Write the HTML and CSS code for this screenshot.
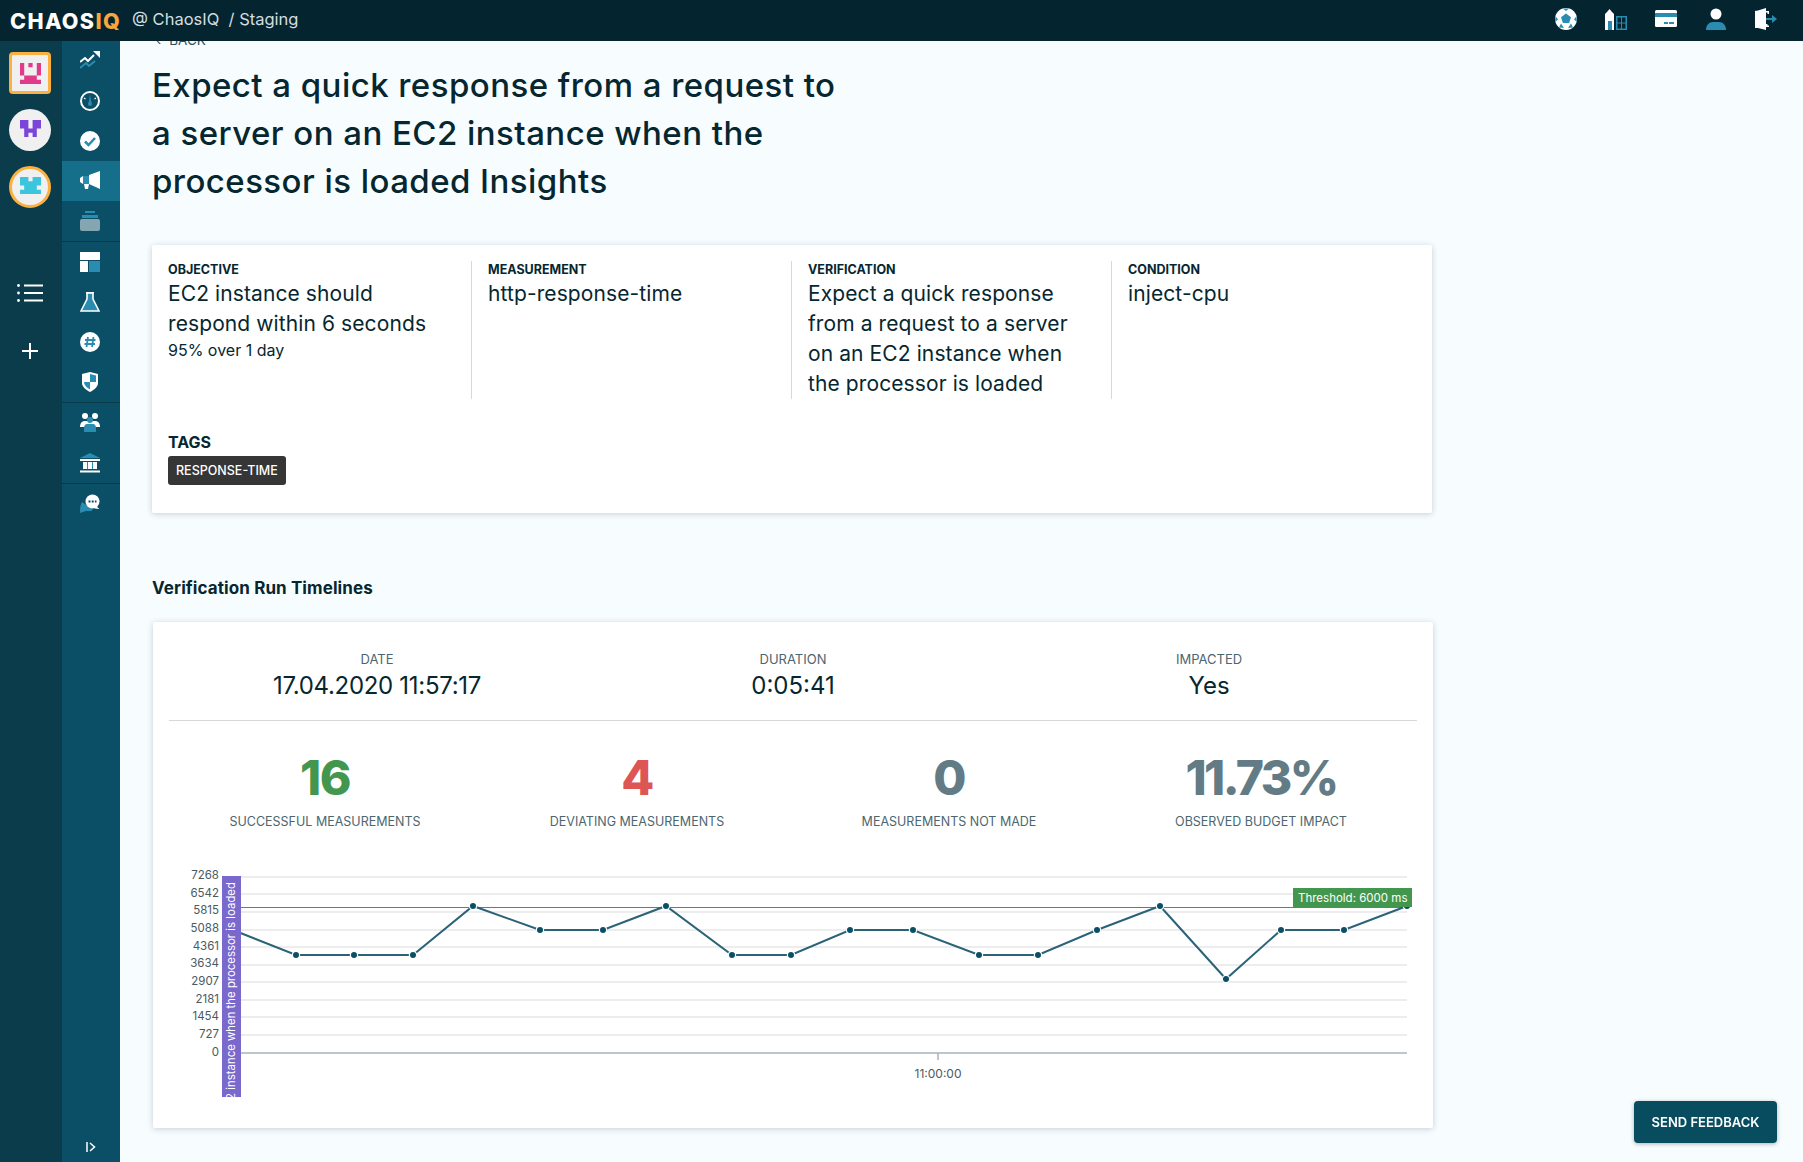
FILE: index.html
```html
<!DOCTYPE html>
<html lang="en">
<head>
  <meta charset="UTF-8">
  <title>Expect a quick response - Insights</title>
  <link rel="stylesheet" href="styles.css">
</head>
<body>
  <!-- Top bar -->
  <header class="topbar">
    <div class="logo">CHAOS<span class="logo-iq">IQ</span></div>
    <div class="crumbs">@ ChaosIQ &nbsp;/ Staging</div>
    <div class="top-icons">
      <svg viewBox="0 0 22 22" class="top-icon"><circle cx="11" cy="11" r="11" fill="#fff"/><path d="M11 5.500l5 3.700-1.900 5.800H7.900L6 9.200z" fill="#2a8cb0"/><path d="M8 .5h6L11 3zM21.500 8l.5 6-3-2.500zM.5 8L0 14l3-2.500zM4 19.500l2-4 3 4.500zM18 19.500l-2-4-3 4.500z" fill="#2a8cb0"/></svg>
      <svg viewBox="0 0 22 22" class="top-icon"><path d="M0 6l2-2 2.500-3L7 4l2 2v16H0z" fill="#fff"/><rect x="3" y="13" width="4" height="9" fill="#2a8cb0"/><path d="M11 8h11v14H11zM12.500 9.500v5h3.500v-5zM17 9.500v5h3.500v-5zM12.500 15.500v5h3.500v-5zM17 15.500v5h3.500v-5z" fill="#2a8cb0" fill-rule="evenodd"/></svg>
      <svg viewBox="0 0 22 18" class="top-icon"><rect width="22" height="17" rx="1.500" fill="#fff"/><rect y="3" width="22" height="4" fill="#2a8cb0"/><rect x="9" y="12" width="4" height="2" fill="#2a8cb0"/><rect x="14" y="12" width="5" height="2" fill="#2a8cb0"/></svg>
      <svg viewBox="0 0 22 22" class="top-icon"><circle cx="11" cy="6" r="5.500" fill="#fff"/><path d="M1 22c0-5 3-8 7-8h6c4 0 7 3 7 8z" fill="#2a8cb0"/></svg>
      <svg viewBox="0 0 22 22" class="top-icon"><path d="M0 3l3-.5L11 0v22l-8-2H0z" fill="#fff"/><path d="M11 3h3v3h-1.500V4.500H11zM11 16h1.500v1.500H14V19h-3z" fill="#fff"/><path d="M11 10h6V7l5 4-5 4v-3h-6z" fill="#2a8cb0"/></svg>
    </div>
  </header>

  <div class="layout">
    <!-- Workspace rail -->
    <aside class="rail">
      <div class="avatar avatar-square">
        <svg viewBox="0 0 5 5" class="pixel"><path d="M0 0h1v3H0zM2 0h1v1H2zM4 0h1v3H4zM1 3h3v1H1zM0 4h5v1H0z" fill="#e03a8b"/></svg>
      </div>
      <div class="avatar">
        <svg viewBox="0 0 5 4" class="pixel pixel-short"><path d="M0 0h2v2h1V0h2v2H4v2H3V3H2v1H1V2H0z" fill="#7a45d8"/></svg>
      </div>
      <div class="avatar avatar-ring">
        <svg viewBox="0 0 5 4" class="pixel pixel-short"><path d="M0 0h2v1h1V0h2v2H4v1h1v1H0V3h1V2H0z" fill="#3cc6de"/></svg>
      </div>
      <svg viewBox="0 0 26 18" class="rail-list"><circle cx="1.500" cy="1.500" r="1.400" fill="#fff"/><circle cx="1.500" cy="9" r="1.400" fill="#fff"/><circle cx="1.500" cy="16.500" r="1.400" fill="#fff"/><path d="M7 1.500h19M7 9h19M7 16.500h19" stroke="#fff" stroke-width="2"/></svg>
      <svg viewBox="0 0 16 16" class="rail-plus"><path d="M8 0v16M0 8h16" stroke="#fff" stroke-width="2"/></svg>
    </aside>

    <!-- Section nav -->
    <nav class="nav">
      <div class="nav-item"><svg viewBox="0 0 20 20"><path d="M0 11l5-4 3 3 6-6" fill="none" stroke="#fff" stroke-width="2"/><path d="M13 0h7v7z" fill="#fff"/><path d="M0 17l6-5 3 3 6-5" fill="none" stroke="#2a8cb0" stroke-width="2"/></svg></div>
      <div class="nav-item"><svg viewBox="0 0 20 20"><circle cx="10" cy="10" r="9" fill="none" stroke="#fff" stroke-width="2"/><path d="M10 3l1.500 10h-3z" fill="#2a8cb0"/><circle cx="10" cy="13" r="2" fill="#2a8cb0"/><path d="M4 7l1.500 1M16 7l-1.500 1" stroke="#fff" stroke-width="1.200"/></svg></div>
      <div class="nav-item"><svg viewBox="0 0 20 20"><circle cx="10" cy="10" r="10" fill="#fff"/><path d="M5 10.500l3.500 3.500L15 7" fill="none" stroke="#2a8cb0" stroke-width="2.500"/></svg></div>
      <div class="nav-item nav-active"><svg viewBox="0 0 20 20"><path d="M0 7l3-2v8l-3-2z" fill="#fff"/><path d="M3 5h6v8H3z" fill="#2a8cb0"/><path d="M9 4l11-4v18L9 13z" fill="#fff"/><path d="M4 13h5l-1 5H5z" fill="#fff"/></svg></div>
      <div class="nav-item nav-split"><svg viewBox="0 0 20 20"><rect x="5" y="0" width="10" height="2" fill="#2a8cb0"/><rect x="2" y="4" width="16" height="3" fill="#2a8cb0"/><rect y="8" width="20" height="12" rx="2" fill="#85a5b2"/></svg></div>
      <div class="nav-item"><svg viewBox="0 0 20 20"><rect width="20" height="8" fill="#fff"/><rect y="9" width="8" height="11" fill="#fff"/><rect x="9" y="9" width="11" height="11" fill="#2a8cb0"/></svg></div>
      <div class="nav-item"><svg viewBox="0 0 20 20"><path d="M7 1h6v6l6 12H1L7 7z" fill="#2a8cb0" stroke="#fff" stroke-width="1.600"/><path d="M6 .5h8" stroke="#fff" stroke-width="1.500"/></svg></div>
      <div class="nav-item"><svg viewBox="0 0 20 20"><circle cx="10" cy="10" r="10" fill="#fff"/><path d="M8 5l-1.500 10M13.500 5L12 15M5 8h10.500M4.500 12H15" stroke="#2a8cb0" stroke-width="1.800"/></svg></div>
      <div class="nav-item nav-split"><svg viewBox="0 0 20 20"><path d="M10 0l8 2v9c0 4-4 7-8 9-4-2-8-5-8-9V2z" fill="#fff"/><path d="M10 2l6 1.500V10h-6zM10 10H4c0 3 3 6 6 7.500z" fill="#2a8cb0"/></svg></div>
      <div class="nav-item"><svg viewBox="0 0 20 20"><circle cx="5" cy="3" r="3" fill="#fff"/><circle cx="15" cy="3" r="3" fill="#fff"/><path d="M0 14c0-4 2-6 5-6h10c3 0 5 2 5 6z" fill="#fff"/><circle cx="10" cy="7" r="3" fill="#2a8cb0"/><path d="M4 18v-4c0-2 1-4 3-4h6c2 0 3 2 3 4v4z" fill="#2a8cb0" transform="translate(0 1)"/></svg></div>
      <div class="nav-item nav-split"><svg viewBox="0 0 20 20"><path d="M10 0l10 5H0z" fill="#2a8cb0"/><rect y="6" width="20" height="2" fill="#fff"/><path d="M3 9h4v7H3zM8 9h4v7H8zM13 9h4v7h-4z" fill="#fff"/><path d="M7 9h1v7H7zM12 9h1v7h-1z" fill="#2a8cb0"/><rect y="17.500" width="20" height="2" fill="#fff"/></svg></div>
      <div class="nav-item"><svg viewBox="0 0 20 20"><path d="M2 8c-2 4-2 8-2 11l6-2h5c2 0 2-3 0-3z" fill="#2a8cb0"/><circle cx="12.500" cy="7.500" r="7" fill="#fff"/><path d="M16 12l3.500 3-5-.5z" fill="#fff"/><path d="M8.500 7.500h8" stroke="#0a4f65" stroke-width="1.800" stroke-dasharray="2 1.200"/></svg></div>
      <div class="nav-toggle"><svg viewBox="0 0 10 10"><path d="M1 0v10" stroke="#fff" stroke-width="1.500"/><path d="M4 1l4.500 4L4 9" fill="none" stroke="#fff" stroke-width="1.500"/></svg></div>
    </nav>

    <main class="main">
      <div class="back"><span class="back-arrow">&#8249;</span>BACK</div>
      <h1 class="title">Expect a quick response from a request to a server on an EC2 instance when the processor is loaded Insights</h1>

      <!-- Experiment summary -->
      <section class="card info-card">
        <div class="info-cols">
          <div class="info-col">
            <div class="info-label">OBJECTIVE</div>
            <div class="info-value">EC2 instance should respond within 6 seconds</div>
            <div class="info-sub">95% over 1 day</div>
          </div>
          <div class="info-col">
            <div class="info-label">MEASUREMENT</div>
            <div class="info-value">http-response-time</div>
          </div>
          <div class="info-col">
            <div class="info-label">VERIFICATION</div>
            <div class="info-value">Expect a quick response from a request to a server on an EC2 instance when the processor is loaded</div>
          </div>
          <div class="info-col info-col-last">
            <div class="info-label">CONDITION</div>
            <div class="info-value">inject-cpu</div>
          </div>
        </div>
        <div class="tags-label">TAGS</div>
        <span class="tag">RESPONSE-TIME</span>
      </section>

      <h2 class="section-title">Verification Run Timelines</h2>

      <!-- Run timeline -->
      <section class="card run-card">
        <div class="run-head">
          <div class="run-cell"><div class="run-label">DATE</div><div class="run-value run-date">17.04.2020 11:57:17</div></div>
          <div class="run-cell"><div class="run-label">DURATION</div><div class="run-value">0:05:41</div></div>
          <div class="run-cell"><div class="run-label">IMPACTED</div><div class="run-value">Yes</div></div>
        </div>
        <div class="stats">
          <div class="stat"><div class="stat-num stat-ok">16</div><div class="stat-label">SUCCESSFUL MEASUREMENTS</div></div>
          <div class="stat"><div class="stat-num stat-bad">4</div><div class="stat-label">DEVIATING MEASUREMENTS</div></div>
          <div class="stat"><div class="stat-num stat-none">0</div><div class="stat-label">MEASUREMENTS NOT MADE</div></div>
          <div class="stat"><div class="stat-num stat-none stat-pct">11.73%</div><div class="stat-label">OBSERVED BUDGET IMPACT</div></div>
        </div>

        <svg class="chart" viewBox="170 865 1250 235" width="1250" height="235">
          <defs><clipPath id="barClip"><rect x="222" y="876" width="19" height="221"/></clipPath></defs>
          <g class="grid">
            <path d="M241 877H1407M241 894H1407M241 912H1407M241 930H1407M241 947H1407M241 965H1407M241 982H1407M241 1000H1407M241 1017H1407M241 1035H1407"/>
          </g>
          <path class="axis" d="M241 1053H1407M938 1053v7"/>
          <path class="threshold" d="M241 907.500H1407"/>
          <g class="ylabels">
            <text x="219" y="879">7268</text><text x="219" y="897">6542</text><text x="219" y="914">5815</text><text x="219" y="932">5088</text><text x="219" y="950">4361</text><text x="219" y="967">3634</text><text x="219" y="985">2907</text><text x="219" y="1003">2181</text><text x="219" y="1020">1454</text><text x="219" y="1038">727</text><text x="219" y="1056">0</text>
          </g>
          <polyline class="line" points="238,932 296,955 354,955 413,955 473,906 540,930 603,930 666,906 732,955 791,955 850,930 913,930 979,955 1038,955 1097,930 1160,906 1226,979 1281,930 1344,930 1407,906"/>
          <g class="dots">
            <circle cx="296" cy="955" r="3.600"/><circle cx="354" cy="955" r="3.600"/><circle cx="413" cy="955" r="3.600"/><circle cx="473" cy="906" r="3.600"/><circle cx="540" cy="930" r="3.600"/><circle cx="603" cy="930" r="3.600"/><circle cx="666" cy="906" r="3.600"/><circle cx="732" cy="955" r="3.600"/><circle cx="791" cy="955" r="3.600"/><circle cx="850" cy="930" r="3.600"/><circle cx="913" cy="930" r="3.600"/><circle cx="979" cy="955" r="3.600"/><circle cx="1038" cy="955" r="3.600"/><circle cx="1097" cy="930" r="3.600"/><circle cx="1160" cy="906" r="3.600"/><circle cx="1226" cy="979" r="3.600"/><circle cx="1281" cy="930" r="3.600"/><circle cx="1344" cy="930" r="3.600"/><circle cx="1407" cy="906" r="3.600"/>
          </g>
          <rect class="bar" x="222" y="876" width="19" height="221"/>
          <g clip-path="url(#barClip)">
            <text class="bar-text" transform="translate(235 882) rotate(-90)">Expect a quick response from a request to a server on an EC2 instance when the processor is loaded</text>
          </g>
          <rect class="thr-box" x="1293" y="888" width="119" height="19"/>
          <text class="thr-text" x="1298" y="902">Threshold: 6000 ms</text>
          <text class="xlabel" x="938" y="1078">11:00:00</text>
        </svg>
      </section>
    </main>
  </div>

  <button class="feedback">SEND FEEDBACK</button>
</body>
</html>
```

FILE: styles.css
```css
/* Page shell */
body {
  margin: 0;
  height: 1162px;
  overflow: hidden;
  background-color: #f7fcff;
  color: #06272f;
  font-family: 'Inter', sans-serif;
}

.topbar {
  display: flex;
  align-items: center;
  height: 41px;
  background-color: #04252f;
  color: #ffffff;
  padding-left: 10px;
}

.logo {
  font-size: 21.5px;
  font-weight: 800;
  width: 122px;
  letter-spacing: 1.4px;
}

.logo-iq {
  color: #f9a63c;
}

.crumbs {
  font-size: 16.5px;
  color: #d3dee1;
  margin-bottom: 3px;
}

.top-icons {
  display: flex;
  align-items: center;
  gap: 28px;
  margin-left: auto;
  padding: 0 26px 4px 0;
}

.top-icon {
  width: 22px;
  height: 22px;
  display: block;
}

.layout {
  display: flex;
  height: 1121px;
}

/* Workspace rail */
.rail {
  width: 62px;
  background-color: #0a3c4b;
  display: flex;
  flex-direction: column;
  align-items: center;
  padding: 11px 2px 0 0;
  box-sizing: border-box;
}

.avatar {
  width: 42px;
  height: 42px;
  box-sizing: border-box;
  border-radius: 50%;
  background-color: #f0f0f0;
  display: flex;
  align-items: center;
  justify-content: center;
  margin-bottom: 15px;
}

.avatar-square {
  border-radius: 4px;
  border: 3px solid #fbb040;
}

.avatar-ring {
  border: 3px solid #fbb040;
}

.pixel {
  width: 21px;
  height: 21px;
}

.pixel-short {
  height: 17px;
  margin-bottom: 4px;
}

.rail-list {
  width: 26px;
  height: 18px;
  margin-top: 61px;
}

.rail-plus {
  width: 16px;
  height: 16px;
  margin-top: 41px;
}

/* Section nav */
.nav {
  width: 58px;
  background-color: #0a4f65;
  position: relative;
}

.nav-item {
  height: 40px;
  box-sizing: content-box;
  padding-right: 2px;
  display: flex;
  align-items: center;
  justify-content: center;
}

.nav-item svg {
  width: 20px;
  height: 20px;
}

.nav-active {
  background-color: #156f8b;
}

.nav-split {
  border-bottom: 1px solid #083a49;
}

.nav-toggle {
  position: absolute;
  left: 24px;
  bottom: 10px;
}

.nav-toggle svg {
  width: 10px;
  height: 10px;
  display: block;
}

/* Main column */
.main {
  flex: 1;
  padding-left: 32px;
  overflow: hidden;
}

.back {
  font-size: 13.5px;
  line-height: 16px;
  margin-top: -9px;
  color: #33505a;
}

.back-arrow {
  margin: 0 8px 0 4px;
}

.title {
  width: 700px;
  margin: 13px 0 40px;
  font-size: 33px;
  font-weight: 500;
  line-height: 48px;
  letter-spacing: 0.45px;
}

.card {
  width: 1280px;
  box-sizing: border-box;
  background-color: #ffffff;
  box-shadow: 0 1px 6px rgba(0, 30, 50, 0.2);
  border-radius: 2px;
}

.info-card {
  padding: 16px 16px 28px;
}

.info-cols {
  display: grid;
  grid-template-columns: repeat(4, 304px);
  column-gap: 16px;
}

.info-col {
  height: 138px;
  border-right: 1px solid #d8d8d8;
  padding-right: 16px;
}

.info-col-last {
  border-right: none;
}

.info-label {
  font-size: 12.5px;
  font-weight: 700;
  line-height: 18px;
}

.info-value {
  font-size: 21px;
  line-height: 30px;
  letter-spacing: 0.1px;
}

.info-sub {
  font-size: 16px;
  line-height: 22px;
}

.tags-label {
  margin-top: 33px;
  font-size: 16px;
  font-weight: 700;
  line-height: 20px;
}

.tag {
  display: inline-block;
  margin-top: 4px;
  padding: 0 8px;
  height: 29px;
  line-height: 29px;
  background-color: #363636;
  border-radius: 3px;
  color: #ffffff;
  font-size: 12.5px;
  font-weight: 500;
}

.section-title {
  margin: 63px 0 22px;
  font-size: 17px;
  font-weight: 700;
  line-height: 24px;
  letter-spacing: 0.1px;
}

/* Run card */
.run-card {
  margin-left: 1px;
  height: 506px;
  padding: 29px 16px 0;
}

.run-head {
  display: grid;
  grid-template-columns: repeat(3, 1fr);
  padding-bottom: 19px;
  border-bottom: 1px solid #d8d8d8;
  text-align: center;
}

.run-label {
  font-size: 13px;
  line-height: 16px;
  color: #4c6670;
}

.run-value {
  font-size: 24px;
  line-height: 30px;
  margin-top: 4px;
}

.run-date {
  letter-spacing: -0.3px;
}

.stats {
  display: grid;
  grid-template-columns: repeat(4, 1fr);
  margin-top: 29px;
  text-align: center;
}

.stat-num {
  font-size: 48px;
  font-weight: 800;
  line-height: 56px;
  letter-spacing: -1.5px;
}

.stat-pct {
  letter-spacing: -2.5px;
}

.stat-ok {
  color: #43964e;
}

.stat-bad {
  color: #dd5555;
}

.stat-none {
  color: #627b85;
}

.stat-label {
  margin-top: 8px;
  font-size: 12.5px;
  line-height: 16px;
  color: #4c6670;
}

.chart {
  display: block;
  margin: 35px 0 0 1px;
}

.grid path {
  fill: none;
  stroke: #e8e8e8;
  stroke-width: 1.5;
}

.axis {
  fill: none;
  stroke: #a8b4bb;
  stroke-width: 1.5;
}

.threshold {
  fill: none;
  stroke: #43964e;
  stroke-width: 1;
}

.ylabels text {
  font-size: 11.5px;
  text-anchor: end;
  fill: #4a5a62;
}

.line {
  fill: none;
  stroke: #2a6378;
  stroke-width: 2;
}

.dots circle {
  fill: #0a4f65;
  stroke: #ffffff;
  stroke-width: 1.2;
}

.bar {
  fill: #7b68cc;
}

.bar-text {
  font-size: 11.4px;
  text-anchor: end;
  fill: #ffffff;
}

.thr-box {
  fill: #43964e;
}

.thr-text {
  font-size: 11.5px;
  fill: #ffffff;
}

.xlabel {
  font-size: 12px;
  text-anchor: middle;
  fill: #4a5a62;
}

.feedback {
  position: fixed;
  left: 1634px;
  top: 1101px;
  width: 143px;
  height: 42px;
  border: none;
  border-radius: 4px;
  background-color: #084c5f;
  color: #ffffff;
  font-family: 'Inter', sans-serif;
  font-size: 13px;
  font-weight: 600;
  box-shadow: 0 1px 4px rgba(0, 0, 0, 0.3);
}
```
